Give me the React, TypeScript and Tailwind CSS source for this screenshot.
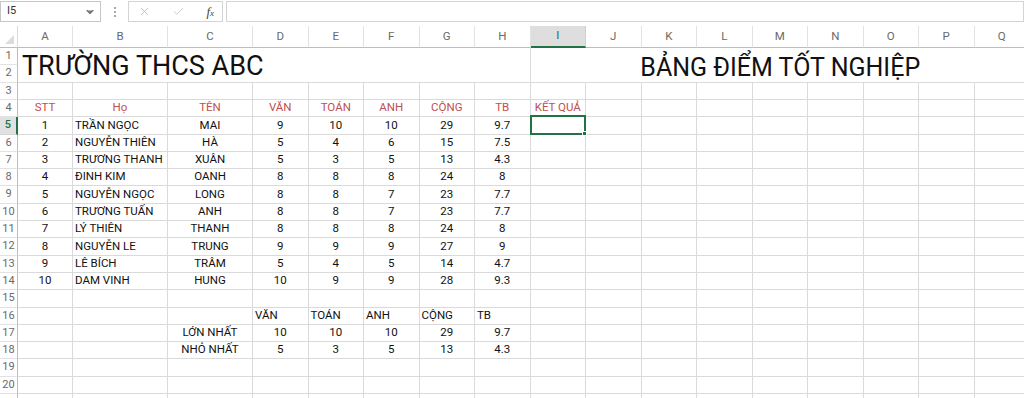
import { X, Check, ChevronDown } from "lucide-react";

const COLS = ["A", "B", "C", "D", "E", "F", "G", "H", "I", "J", "K", "L", "M", "N", "O", "P", "Q"];

type Align = "l" | "c";
type Cell = { t: string; a: Align; red?: boolean } | null;

const students: [string, string, string, string, string, string, string, string][] = [
    ["1", "TRẦN NGỌC", "MAI", "9", "10", "10", "29", "9.7"],
    ["2", "NGUYỄN THIÊN", "HÀ", "5", "4", "6", "15", "7.5"],
    ["3", "TRƯƠNG THANH", "XUÂN", "5", "3", "5", "13", "4.3"],
    ["4", "ĐINH KIM", "OANH", "8", "8", "8", "24", "8"],
    ["5", "NGUYỄN NGỌC", "LONG", "8", "8", "7", "23", "7.7"],
    ["6", "TRƯƠNG TUẤN", "ANH", "8", "8", "7", "23", "7.7"],
    ["7", "LÝ THIÊN", "THANH", "8", "8", "8", "24", "8"],
    ["8", "NGUYỄN LE", "TRUNG", "9", "9", "9", "27", "9"],
    ["9", "LÊ BÍCH", "TRÂM", "5", "4", "5", "14", "4.7"],
    ["10", "DAM VINH", "HUNG", "10", "9", "9", "28", "9.3"],
];

const headers = ["STT", "Họ", "TÊN", "VĂN", "TOÁN", "ANH", "CỘNG", "TB", "KẾT QUẢ"];

function cellsFor(row: number): Cell[] {
    const out: Cell[] = Array(17).fill(null);
    if (row === 4) {
        headers.forEach((h, i) => (out[i] = { t: h, a: "c", red: true }));
    } else if (row >= 5 && row <= 14) {
        const s = students[row - 5];
        s.forEach((v, i) => (out[i] = { t: v, a: i === 1 ? "l" : "c" }));
    } else if (row === 16) {
        ["VĂN", "TOÁN", "ANH", "CỘNG", "TB"].forEach((v, i) => (out[i + 3] = { t: v, a: "l" }));
    } else if (row === 17) {
        out[2] = { t: "LỚN NHẤT", a: "c" };
        ["10", "10", "10", "29", "9.7"].forEach((v, i) => (out[i + 3] = { t: v, a: "c" }));
    } else if (row === 18) {
        out[2] = { t: "NHỎ NHẤT", a: "c" };
        ["5", "3", "5", "13", "4.3"].forEach((v, i) => (out[i + 3] = { t: v, a: "c" }));
    }
    return out;
}

function RowHeader({ n }: { n: number }) {
    if (n === 5) {
        return (
            <div className="flex items-center justify-center bg-[#e1e1e1] border-r-2 border-r-[#217346] border-b border-b-[#d4d4d4] text-[11px] text-[#217346] font-medium">
                {n}
            </div>
        );
    }
    return (
        <div className="flex items-center justify-center bg-white border-r border-r-[#bdbdbd] border-b border-b-[#e2e2e2] text-[11px] text-[#6a6a6a]">
            {n <= 20 ? n : ""}
        </div>
    );
}

function DataCell({ cell, selected }: { cell: Cell; selected?: boolean }) {
    return (
        <div className="relative flex items-center border-r border-b border-[#dadada] overflow-visible whitespace-nowrap">
            {cell && (
                <span
                    className={`${cell.a === "c" ? "w-full text-center" : "pl-[2px]"} ${cell.red ? "text-[#c0504d]" : "text-[#111]"} text-[11.5px] leading-none`}
                >
                    {cell.t}
                </span>
            )}
            {selected && (
                <div className="absolute -top-[2px] -left-[1px] -right-[1px] bottom-[-1px] border-2 border-[#217346] z-10">
                    <div className="absolute -right-[3px] -bottom-[3px] w-[5px] h-[5px] bg-[#217346] border border-white" />
                </div>
            )}
        </div>
    );
}

export default function App() {
    const rows = Array.from({ length: 21 }, (_, i) => i + 1);

    return (
        <div className="w-[1024px] h-[398px] overflow-hidden bg-white font-['Roboto','Open_Sans',sans-serif]">
            {/* Formula bar */}
            <div className="flex items-center h-[22px] pt-[1px]">
                <div className="flex items-center justify-between w-[101px] h-[21px] border border-[#c6c6c6] pl-[6px] pr-[4px]">
                    <span className="text-[11px] text-[#333]">I5</span>
                    <ChevronDown className="w-3 h-3 text-[#777]" strokeWidth={2.5} fill="#777" />
                </div>
                <div className="w-[27px] flex flex-col items-center gap-[2px]">
                    <span className="w-[2px] h-[2px] bg-[#aaa]" />
                    <span className="w-[2px] h-[2px] bg-[#aaa]" />
                    <span className="w-[2px] h-[2px] bg-[#aaa]" />
                </div>
                <div className="flex items-center w-[95px] h-[21px] border border-[#d4d4d4] pl-[9px] pr-[8px] justify-between">
                    <X className="w-[13px] h-[13px] text-[#b8b8b8]" strokeWidth={1.5} />
                    <Check className="w-[13px] h-[13px] text-[#c4c4c4]" strokeWidth={1.5} />
                    <span className="font-['Liberation_Serif',serif] italic text-[13px] text-[#444] leading-none">
                        f<span className="text-[9px]">x</span>
                    </span>
                </div>
                <div className="flex-1 h-[21px] ml-[3px] border border-[#d4d4d4]" />
            </div>

            {/* Sheet */}
            <div className="mt-[4px] grid grid-cols-[18px_55px_95px_85px_repeat(14,55.5px)] grid-rows-[22px_17px_18px_17px_17px_18px_17px_17px_17px_18px_17px_17px_18px_17px_17px_18px_17px_17px_17px_18px_17px_17px]">
                {/* Merged titles */}
                <div className="col-start-2 col-span-8 row-start-2 row-span-2 flex items-end pl-[4px] pb-[2px] border-r border-b border-[#dadada] overflow-visible whitespace-nowrap">
                    <span className="text-[27px] leading-none text-[#111]">TRƯỜNG THCS ABC</span>
                </div>
                <div className="col-start-10 col-span-9 row-start-2 row-span-2 flex items-end justify-center pb-[2px] border-b border-[#dadada] whitespace-nowrap">
                    <span className="text-[25px] leading-none text-[#111]">BẢNG ĐIỂM TỐT NGHIỆP</span>
                </div>

                {/* Column headers */}
                <div className="relative border-r border-r-[#dadada] border-b border-b-[#bdbdbd]">
                    <div className="absolute right-[3px] bottom-[3px] w-0 h-0 border-l-[9px] border-l-transparent border-b-[9px] border-b-[#dcdcdc]" />
                </div>
                {COLS.map((c) =>
                    c === "I" ? (
                        <div key={c} className="flex items-center justify-center bg-[#dedede] border-r border-r-[#cfcfcf] border-b-2 border-b-[#217346] text-[11.5px] text-[#217346]">
                            {c}
                        </div>
                    ) : (
                        <div key={c} className="flex items-center justify-center bg-white border-r border-r-[#e2e2e2] border-b border-b-[#bdbdbd] text-[11.5px] text-[#6a6a6a]">
                            {c}
                        </div>
                    )
                )}

                {rows.map((r) => (
                    <div key={r} className="contents">
                        <RowHeader n={r} />
                        {r > 2 && cellsFor(r).map((cell, i) => <DataCell key={i} cell={cell} selected={r === 5 && i === 8} />)}
                    </div>
                ))}
            </div>
        </div>
    );
}
